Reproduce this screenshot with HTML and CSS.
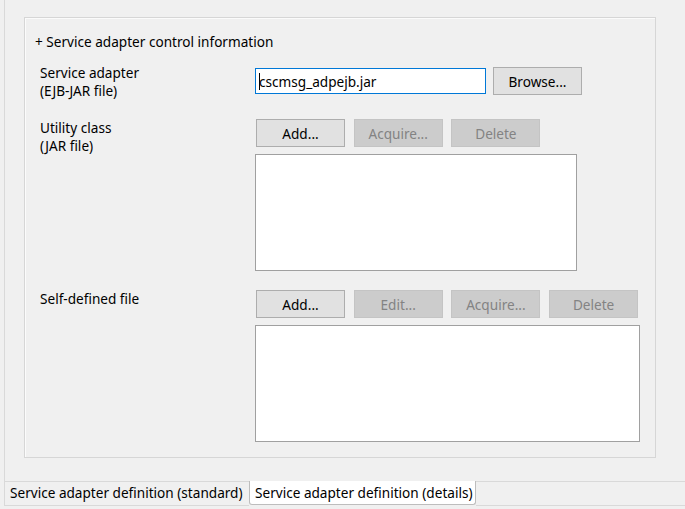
FILE: index.html
```html
<!DOCTYPE html>
<html>
<head>
<meta charset="utf-8">
<link rel="stylesheet" href="styles.css">
</head>
<body>
<div class="window">
  <div class="frame">
    <div class="group">
      <div class="title">+ Service adapter control information</div>
      <div class="row row-adapter">
        <div class="label">Service adapter<br>(EJB-JAR file)</div>
        <div class="controls">
          <div class="line">
            <div class="textbox"><span class="caret"></span>cscmsg_adpejb.jar</div>
            <div class="btn browse">Browse...</div>
          </div>
        </div>
      </div>
      <div class="row row-utility">
        <div class="label">Utility class<br>(JAR file)</div>
        <div class="controls">
          <div class="buttons">
            <div class="btn">Add...</div>
            <div class="btn disabled">Acquire...</div>
            <div class="btn disabled">Delete</div>
          </div>
          <div class="listbox list-utility"></div>
        </div>
      </div>
      <div class="row row-self">
        <div class="label">Self-defined file</div>
        <div class="controls">
          <div class="buttons">
            <div class="btn">Add...</div>
            <div class="btn disabled">Edit...</div>
            <div class="btn disabled">Acquire...</div>
            <div class="btn disabled">Delete</div>
          </div>
          <div class="listbox list-self"></div>
        </div>
      </div>
    </div>
  </div>
  <div class="tabs">
    <div class="tab">Service adapter definition (standard)</div>
    <div class="tab selected">Service adapter definition (details)</div>
    <div class="tab-fill"></div>
  </div>
</div>
</body>
</html>
```

FILE: styles.css
```css
html, body {
  margin: 0;
  padding: 0;
}
body {
  width: 685px;
  height: 509px;
  background: #f0f0f0;
  font-family: "Noto Sans", "Open Sans", "DejaVu Sans", sans-serif;
  font-size: 13.6px;
  color: #000;
  overflow: hidden;
}
.window {
  display: flex;
  flex-direction: column;
  height: 509px;
}
.frame {
  margin-left: 4px;
  border-left: 1px solid #d9d9d9;
  height: 481px;
  padding-left: 19px;
  padding-top: 17px;
  box-sizing: border-box;
}
.group {
  width: 632px;
  height: 441px;
  box-sizing: border-box;
  border: 1px solid #d6d6d6;
  box-shadow: inset 1px 1px 0 #fbfbfb;
  padding: 15px 0 0 15px;
  display: flex;
  flex-direction: column;
}
.title {
  line-height: 18px;
  height: 18px;
  margin-left: -5px;
  white-space: nowrap;
}
.row {
  display: flex;
  align-items: flex-start;
}
.label {
  width: 215px;
  line-height: 18px;
  white-space: nowrap;
}
.controls {
  display: flex;
  flex-direction: column;
}
.row-adapter {
  margin-top: 13px;
}
.row-adapter .controls {
  padding-top: 3px;
}
.line {
  display: flex;
  align-items: center;
  gap: 7px;
}
.textbox {
  width: 231px;
  height: 26px;
  box-sizing: border-box;
  border: 1px solid #0078d7;
  background: #fff;
  display: flex;
  align-items: center;
  padding-left: 3px;
  white-space: nowrap;
}
.caret {
  display: inline-block;
  width: 1px;
  height: 17px;
  background: #000;
  margin-right: -1px;
}
.btn {
  width: 89px;
  height: 28px;
  box-sizing: border-box;
  border: 1px solid #adadad;
  background: #e1e1e1;
  display: flex;
  align-items: center;
  justify-content: center;
  white-space: nowrap;
}
.btn.disabled {
  border-color: #c4c4c4;
  background: #cccccc;
  color: #838383;
}
.buttons {
  display: flex;
  gap: 8.7px;
  margin-left: 1px;
}
.listbox {
  margin-top: 7px;
  height: 117px;
  box-sizing: border-box;
  border: 1px solid #a0a0a0;
  background: #fff;
}
.list-utility {
  width: 322px;
}
.list-self {
  width: 385px;
}
.row-utility {
  margin-top: 19px;
}
.row-self {
  margin-top: 19px;
}
.tabs {
  display: flex;
  height: 25px;
  margin-left: 4px;
  border-top: 1px solid #d9d9d9;
  box-sizing: border-box;
}
.tab {
  height: 24px;
  box-sizing: border-box;
  line-height: 22px;
  padding: 0 5px;
  white-space: nowrap;
  border-left: 1px solid #d9d9d9;
  border-bottom: 1px solid #d9d9d9;
}
.tab:first-child {
  width: 245px;
}
.tab.selected {
  width: 227px;
  background: #fff;
  border-left: 1px solid #bdbdbd;
  border-right: 1px solid #bdbdbd;
  border-bottom: 1px solid #bdbdbd;
  border-radius: 0 0 3px 3px;
  margin-top: -1px;
  height: 24px;
  line-height: 23px;
}
.tab-fill {
  flex: 1;
  border-bottom: 1px solid #d9d9d9;
  height: 24px;
  box-sizing: border-box;
}
```
